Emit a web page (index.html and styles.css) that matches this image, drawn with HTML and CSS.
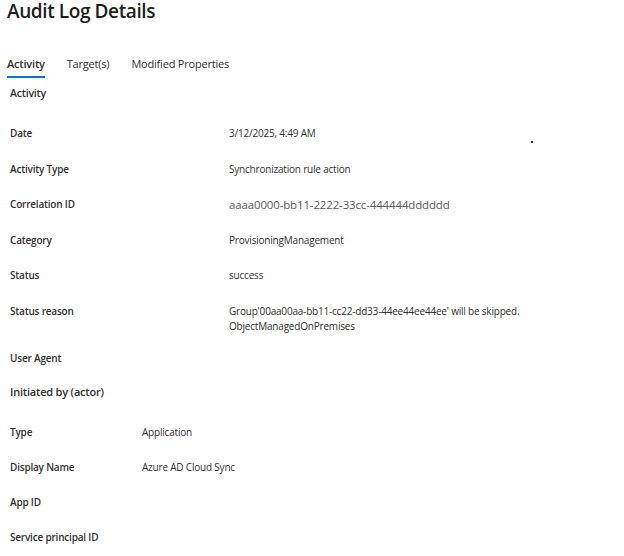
FILE: index.html
```html
<!DOCTYPE html>
<html lang="en">
<head>
    <meta charset="UTF-8">
    <meta name="viewport" content="width=device-width, initial-scale=1.0">
    <title>Audit Log Details</title>
    <link rel="stylesheet" href="styles.css">
</head>
<body>
    <div class="page">
        <h1>Audit Log Details</h1>
        <div class="tabs">
            <a class="tab active" href="#">Activity</a>
            <a class="tab" href="#">Target(s)</a>
            <a class="tab" href="#">Modified Properties</a>
        </div>

        <div class="section">
            <div class="section-title">Activity</div>
            <div class="details wide">
                <div class="label">Date</div>
                <div class="value">3/12/2025, 4:49 AM</div>
                <div class="label">Activity Type</div>
                <div class="value">Synchronization rule action</div>
                <div class="label">Correlation ID</div>
                <div class="value id">aaaa0000-bb11-2222-33cc-444444dddddd</div>
                <div class="label">Category</div>
                <div class="value">ProvisioningManagement</div>
                <div class="label">Status</div>
                <div class="value">success</div>
                <div class="label">Status reason</div>
                <div class="value multi">Group'00aa00aa-bb11-cc22-dd33-44ee44ee44ee' will be skipped.<br>ObjectManagedOnPremises</div>
                <div class="label">User Agent</div>
                <div class="value"></div>
            </div>
        </div>

        <div class="section">
            <div class="section-title big">Initiated by (actor)</div>
            <div class="details narrow">
                <div class="label">Type</div>
                <div class="value">Application</div>
                <div class="label">Display Name</div>
                <div class="value">Azure AD Cloud Sync</div>
                <div class="label">App ID</div>
                <div class="value"></div>
                <div class="label">Service principal ID</div>
                <div class="value"></div>
            </div>
        </div>
        <span class="speck"></span>
    </div>
</body>
</html>
```

FILE: styles.css
```css
* {
    margin: 0;
    padding: 0;
    box-sizing: border-box;
}
body {
    background: white;
    font-family: 'Open Sans', 'Noto Sans', sans-serif;
    color: #323130;
}
.page {
    position: relative;
    padding: 0 7px;
}
h1 {
    font-size: 19px;
    font-weight: 600;
    line-height: 20px;
    padding-top: 1px;
    color: #201f1e;
    letter-spacing: -0.4px;
}
.tabs {
    display: flex;
    gap: 22px;
    margin-top: 35px;
}
.tab {
    font-size: 11px;
    line-height: 15px;
    color: #323130;
    text-decoration: none;
    padding-bottom: 5px;
    border-bottom: 2px solid transparent;
    letter-spacing: -0.2px;
}
.tab.active {
    font-weight: 600;
    border-bottom-color: #0078d4;
}
.section-title {
    font-size: 10.5px;
    font-weight: 600;
    line-height: 15px;
    padding: 8px 3px 0;
    letter-spacing: -0.2px;
}
.section-title.big {
    font-size: 11px;
    padding-top: 18px;
}
.details {
    display: grid;
    row-gap: 20.5px;
    padding: 25px 3px 0;
    font-size: 10px;
    line-height: 15px;
    letter-spacing: -0.2px;
}
.details.wide {
    grid-template-columns: 219px 1fr;
}
.details.narrow {
    grid-template-columns: 132px 1fr;
    row-gap: 20px;
    padding-top: 26px;
}
.label {
    font-weight: 600;
}
.value {
    min-height: 15px;
}
.value.multi {
    margin-bottom: -3px;
}
.value.id {
    font-size: 11.5px;
    color: #5c5a58;
    letter-spacing: -0.15px;
}
.speck {
    position: absolute;
    left: 531px;
    top: 141px;
    width: 2px;
    height: 2px;
    background: #333;
}
```
